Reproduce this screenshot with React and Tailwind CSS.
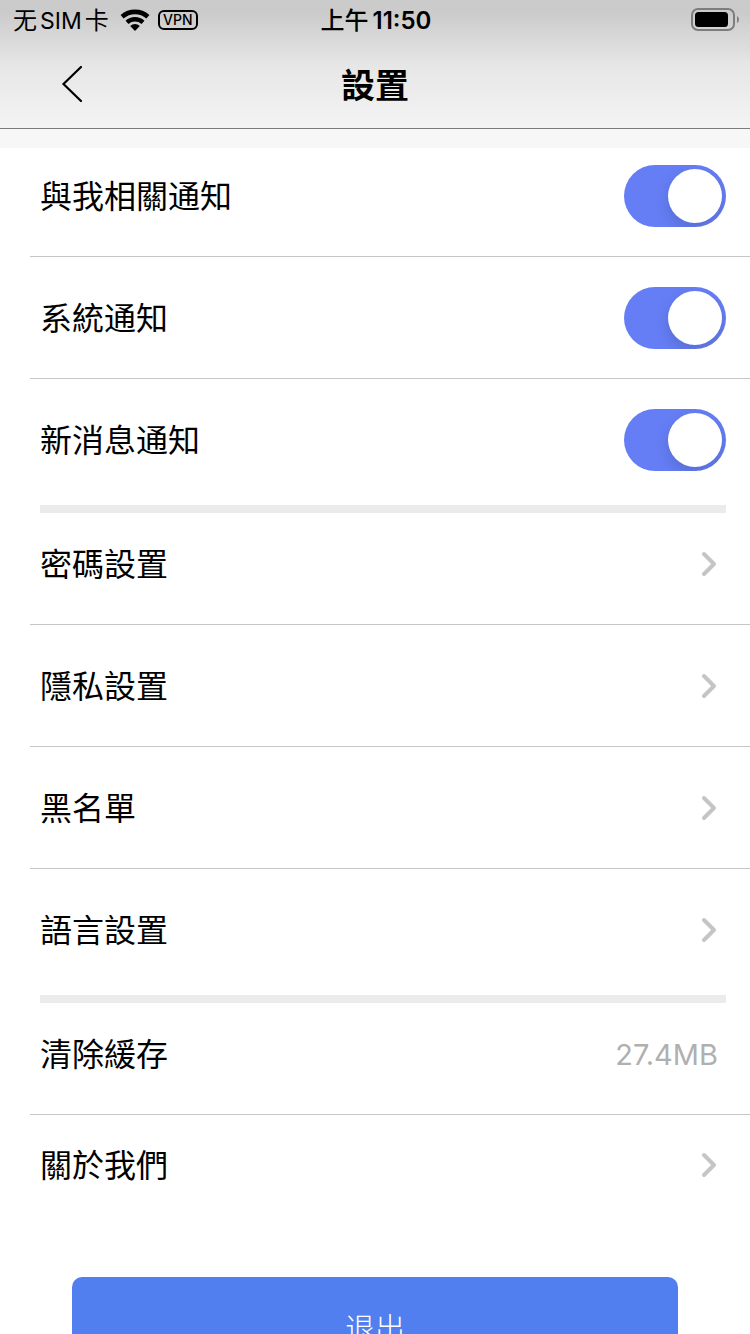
import React from "react";

const alertItems = [
  { id: "related", label: "與我相關通知", row: "pt-[17px] pb-[29px] border-b" },
  { id: "system", label: "系統通知", row: "pt-[30px] pb-[29px] border-b" },
  { id: "message", label: "新消息通知", row: "pt-[30px] pb-[34px]" },
];

const linkItems = [
  { id: "password", label: "密碼設置", row: "pt-5 pb-[29px] border-b" },
  { id: "privacy", label: "隱私設置", row: "pt-[30px] pb-[29px] border-b" },
  { id: "blocklist", label: "黑名單", row: "pt-[30px] pb-[29px] border-b" },
  { id: "language", label: "語言設置", row: "pt-[30px] pb-[34px]" },
];

const rowBase =
  "ml-[30px] flex items-center justify-between border-[#c6c6c8] pl-[10px] text-[32px] leading-[60px] text-black";

function WifiIcon() {
  return (
    <svg width="30" height="24" viewBox="0 0 30 24" fill="none" aria-hidden="true">
      <path d="M2.1 8.7A19.6 19.6 0 0 1 27.9 8.7" stroke="#000" strokeWidth="4.6" />
      <path d="M7 14.3A12 12 0 0 1 23 14.3" stroke="#000" strokeWidth="4.4" />
      <path d="M15 23L10.2 18A7 7 0 0 1 19.8 18Z" fill="#000" />
    </svg>
  );
}

function BatteryIcon() {
  return (
    <svg width="48" height="24" viewBox="0 0 48 24" fill="none" aria-hidden="true">
      <rect x="1" y="1" width="42" height="21" rx="6" stroke="#7d7d7d" strokeWidth="2" />
      <rect x="4" y="4" width="33" height="15" rx="3.5" fill="#000" />
      <path d="M46 8Q48 9 48 11.5Q48 14 46 15Z" fill="#7d7d7d" />
    </svg>
  );
}

function Chevron() {
  return (
    <svg className="mr-[33px]" width="16" height="26" viewBox="0 0 16 26" fill="none" aria-hidden="true">
      <path
        d="M3 3L13 13L3 23"
        stroke="#c5c5c7"
        strokeWidth="4"
        strokeLinecap="round"
        strokeLinejoin="round"
      />
    </svg>
  );
}

function Divider() {
  return <div className="ml-10 mr-6 h-2 bg-[#ebebeb]" />;
}

function SwitchRow({ item }) {
  return (
    <div className={`${rowBase} ${item.row}`}>
      <label htmlFor={item.id} className="pt-0.5">
        {item.label}
      </label>
      <input
        id={item.id}
        type="checkbox"
        role="switch"
        defaultChecked
        className="mr-6 flex h-[62px] w-[102px] shrink-0 cursor-pointer appearance-none items-center overflow-hidden rounded-full bg-[#e5e5ea] px-1 before:block before:size-[54px] before:rounded-full before:bg-white before:shadow-[0_6px_16px_rgba(0,0,0,0.14)] checked:justify-end checked:bg-[#657ef5]"
      />
    </div>
  );
}

function LinkRow({ label, row }) {
  return (
    <a href="#" className={`${rowBase} ${row}`}>
      <span className="pt-0.5">{label}</span>
      <Chevron />
    </a>
  );
}

export default function App() {
  return (
    <div className="flex h-screen flex-col bg-white font-['Inter','Noto_Sans_CJK_SC',sans-serif] text-black">
      <header className="shrink-0 border-b border-[#7b7b7b] bg-linear-to-b from-[#cbcbcb] from-10% via-[#e6e6e6] via-50% to-[#f4f4f4]">
        <div className="grid h-10 grid-cols-[1fr_auto_1fr] items-center pl-[13px] pr-[11px] text-2xl leading-[38px]">
          <div className="flex items-center">
            <span className="flex gap-[3px] pt-0.5">
              <span>无</span>
              <span className="text-[23px]">SIM</span>
              <span>卡</span>
            </span>
            <span className="ml-[11px]">
              <WifiIcon />
            </span>
            <span className="ml-2 flex h-5 w-10 items-center justify-center rounded-md border-2 border-black text-sm font-medium">
              VPN
            </span>
          </div>
          <div className="flex gap-1 pt-0.5 font-medium">
            <span>上午</span>
            <span className="font-semibold">11:50</span>
          </div>
          <div className="flex justify-end">
            <BatteryIcon />
          </div>
        </div>
        <div className="grid h-[88px] grid-cols-[1fr_auto_1fr] items-center">
          <button type="button" aria-label="返回" className="ml-[60px] w-6">
            <svg width="24" height="38" viewBox="0 0 24 38" fill="none" aria-hidden="true">
              <path d="M21 2L3.5 19L21 36" stroke="#000" strokeWidth="2.2" strokeLinecap="round" />
            </svg>
          </button>
          <h1 className="pt-1 text-[34px] font-bold leading-[84px]">設置</h1>
        </div>
      </header>

      <main className="min-h-0 flex-1 overflow-y-auto [scrollbar-width:none]">
        <div className="h-[19px] bg-[#f7f7f7]" />
        {alertItems.map((item) => (
          <SwitchRow key={item.id} item={item} />
        ))}
        <Divider />
        {linkItems.map((item) => (
          <LinkRow key={item.id} label={item.label} row={item.row} />
        ))}
        <Divider />
        <button type="button" className="block w-full text-left">
          <span className={`${rowBase} border-b pt-5 pb-[29px]`}>
            <span className="pt-0.5">清除緩存</span>
            <span className="mr-8 pt-0.5 text-[29px] text-[#b0b0b0]">27.4MB</span>
          </span>
        </button>
        <LinkRow label="關於我們" row="pt-[19px]" />
        <div className="px-[72px] pt-[81px]">
          <button
            type="button"
            className="h-[100px] w-full rounded-[10px] bg-[#527ff0] pt-0.5 text-[30px] font-light text-white"
          >
            退出
          </button>
        </div>
      </main>
    </div>
  );
}
